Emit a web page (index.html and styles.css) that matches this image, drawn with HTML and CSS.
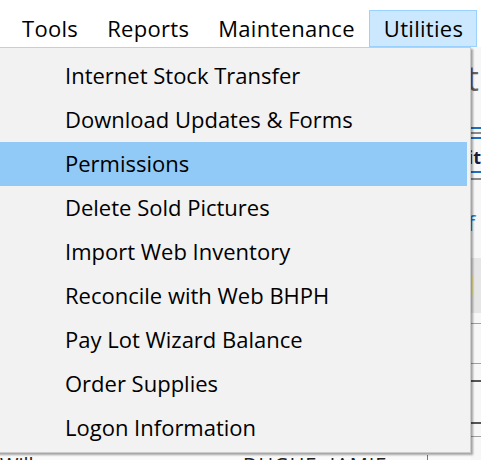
FILE: index.html
```html
<!DOCTYPE html>
<html>
<head>
<meta charset="utf-8">
<link rel="stylesheet" href="styles.css">
</head>
<body>
<div class="menubar">
  <div class="mb-item">Tools</div>
  <div class="mb-item">Reports</div>
  <div class="mb-item">Maintenance</div>
  <div class="mb-item active">Utilities</div>
</div>
<div class="window">
  <div class="win-left">
    <div class="bottom-row">
      <span class="cell-a">Will</span>
      <span class="cell-b">DUGUE, JAMIE</span>
      <span class="vline"></span>
    </div>
  </div>
  <div class="win-right">
    <div class="big-t">t</div>
    <div class="rule blue r1"></div>
    <div class="rule gray r2"></div>
    <div class="rule blue r3"></div>
    <div class="it-text">it</div>
    <div class="rule blue r4"></div>
    <div class="rule gray r5"></div>
    <div class="f-text">f</div>
    <div class="gray-box"><div class="yellow"></div></div>
    <div class="rule lgray r6"></div>
    <div class="rule lgray r7"></div>
    <div class="rule dark r8"></div>
    <div class="rule dark r9"></div>
    <div class="rule lgray r10"></div>
  </div>
</div>
<div class="dropdown">
  <div class="dd-item">Internet Stock Transfer</div>
  <div class="dd-item">Download Updates &amp; Forms</div>
  <div class="dd-item hover">Permissions</div>
  <div class="dd-item">Delete Sold Pictures</div>
  <div class="dd-item">Import Web Inventory</div>
  <div class="dd-item">Reconcile with Web BHPH</div>
  <div class="dd-item">Pay Lot Wizard Balance</div>
  <div class="dd-item">Order Supplies</div>
  <div class="dd-item">Logon Information</div>
</div>
</body>
</html>
```
FILE: styles.css
```css
* { box-sizing: border-box; }
html, body {
  margin: 0;
  padding: 0;
  width: 481px;
  height: 460px;
  overflow: hidden;
  background: #ffffff;
  font-family: "Segoe UI", "Open Sans", sans-serif;
  color: #000;
  position: relative;
}
.menubar {
  height: 47px;
  display: flex;
  align-items: flex-end;
  padding-left: 7px;
  background: #fff;
}
.mb-item {
  height: 37px;
  padding: 0 13px 0 14px;
  font-size: 22px;
  line-height: 35px;
  border: 1px solid transparent;
  letter-spacing: 0.3px;
}
.mb-item.active {
  background: #cce8ff;
  border-color: #99d1ff;
}
.window {
  display: flex;
  height: 420px;
  background: #fafafa;
}
.win-left {
  width: 472px;
  display: flex;
  flex-direction: column;
  justify-content: flex-end;
}
.bottom-row {
  height: 12px;
  display: flex;
  align-items: flex-start;
  font-size: 20px;
  line-height: 20px;
  color: #222;
}
.cell-a { width: 243px; }
.cell-b { width: 184px; letter-spacing: 1px; }
.vline { width: 1px; height: 12px; background: #777; }
.win-right {
  flex: 1;
  display: flex;
  flex-direction: column;
  background: #f7f7f7;
}
.big-t {
  margin-top: 14px;
  height: 34px;
  font-size: 34px;
  line-height: 34px;
  color: #6b6060;
  margin-left: -4px;
}
.rule { height: 2px; }
.rule.blue { background: #1e6fc0; }
.rule.gray { background: #8a8a8a; }
.rule.lgray { background: #a0a0a0; height: 1px; }
.rule.dark { background: #555; }
.r1 { margin-top: 32px; }
.r2 { margin-top: 3px; }
.r3 { margin-top: 3px; }
.it-text {
  margin-top: 10px;
  height: 18px;
  font-size: 18px;
  line-height: 16px;
  font-weight: bold;
  color: #1a1a40;
  margin-left: -3px;
}
.r4 { margin-top: 4px; }
.r5 { margin-top: 5px; }
.f-text {
  margin-top: 32px;
  height: 20px;
  font-size: 22px;
  line-height: 20px;
  color: #1a7ee0;
  margin-left: -3px;
}
.gray-box {
  margin-top: 26px;
  height: 55px;
  background: #e6e6e6;
  padding-top: 17px;
}
.yellow { width: 2px; height: 20px; background: #f5ee9a; }
.r6 { margin-top: 10px; }
.r7 { margin-top: 39px; }
.r8 { margin-top: 16px; }
.r9 { margin-top: 40px; }
.r10 { margin-top: 12px; }
.dropdown {
  position: absolute;
  left: -4px;
  top: 47px;
  width: 475px;
  height: 406px;
  background: #f2f2f2;
  border: 1px solid #cccccc;
  padding: 6px 0 2px;
  box-shadow: 2px 2px 2px rgba(0, 0, 0, 0.35);
}
.dd-item {
  height: 44px;
  line-height: 43px;
  margin: 0 3px;
  padding-left: 65px;
  font-size: 22px;
  white-space: nowrap;
}
.dd-item.hover {
  background: #91c9f7;
}
```
